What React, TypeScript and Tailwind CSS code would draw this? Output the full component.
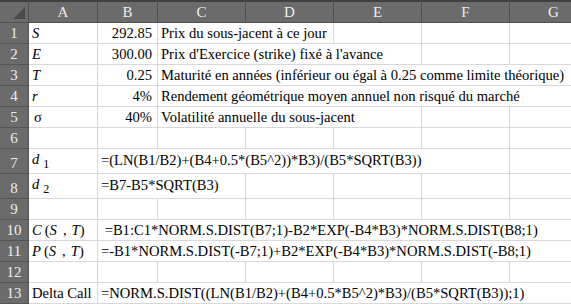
import type { ReactNode } from 'react';

type Cell = { span?: number; content?: ReactNode; right?: boolean };

const spanClass: Record<number, string> = {
    1: 'col-span-1',
    2: 'col-span-2',
    3: 'col-span-3',
    4: 'col-span-4',
    5: 'col-span-5',
    6: 'col-span-6',
};

const empty = (n: number): Cell[] => Array.from({ length: n }, () => ({}));

function Sub({ v, s }: { v: string; s: string }) {
    return (
        <span className="italic">
            {v}
            <span className="not-italic text-[12px] ml-[4px] relative top-[4px]">{s}</span>
        </span>
    );
}

function Fn({ f }: { f: string }) {
    return (
        <span>
            <span className="italic">{f}</span>
            <span className="ml-[3px]">(</span>
            <span className="italic">S</span>
            <span className="ml-[6px]">,</span>
            <span className="italic ml-[5px]">T</span>
            <span>)</span>
        </span>
    );
}

const rows: { h: string; cells: Cell[] }[] = [
    {
        h: 'pb-[1px]',
        cells: [
            { content: <span className="italic">S</span> },
            { content: '292.85', right: true },
            { span: 2, content: 'Prix du sous-jacent à ce jour' },
            ...empty(3),
        ],
    },
    {
        h: 'pb-[1px]',
        cells: [
            { content: <span className="italic">E</span> },
            { content: '300.00', right: true },
            { span: 3, content: "Prix d'Exercice (strike) fixé à l'avance" },
            ...empty(2),
        ],
    },
    {
        h: 'pb-[1px]',
        cells: [
            { content: <span className="italic">T</span> },
            { content: '0.25', right: true },
            { span: 5, content: 'Maturité en années (inférieur ou égal à 0.25 comme limite théorique)' },
        ],
    },
    {
        h: 'pb-[1px]',
        cells: [
            { content: <span className="italic">r</span> },
            { content: '4%', right: true },
            { span: 5, content: 'Rendement géométrique moyen annuel non risqué du marché' },
        ],
    },
    {
        h: 'pb-[1px]',
        cells: [
            { content: <span className="ml-[2px]">σ</span> },
            { content: '40%', right: true },
            { span: 3, content: 'Volatilité annuelle du sous-jacent' },
            ...empty(2),
        ],
    },
    { h: 'pb-[1px]', cells: empty(7) },
    {
        h: 'pb-[4px]',
        cells: [
            { content: <Sub v="d" s="1" /> },
            { span: 5, content: '=(LN(B1/B2)+(B4+0.5*(B5^2))*B3)/(B5*SQRT(B3))' },
            ...empty(1),
        ],
    },
    {
        h: 'pb-[4px]',
        cells: [
            { content: <Sub v="d" s="2" /> },
            { span: 2, content: '=B7-B5*SQRT(B3)' },
            ...empty(4),
        ],
    },
    { h: 'pb-[1px]', cells: empty(7) },
    {
        h: 'pb-[1px]',
        cells: [
            { content: <Fn f="C" /> },
            { span: 6, content: '\u00a0=B1:C1*NORM.S.DIST(B7;1)-B2*EXP(-B4*B3)*NORM.S.DIST(B8;1)' },
        ],
    },
    {
        h: 'pb-[1px]',
        cells: [
            { content: <Fn f="P" /> },
            { span: 6, content: '=-B1*NORM.S.DIST(-B7;1)+B2*EXP(-B4*B3)*NORM.S.DIST(-B8;1)' },
        ],
    },
    { h: 'pb-[1px]', cells: empty(7) },
    {
        h: 'pb-[1px]',
        cells: [
            { content: 'Delta Call' },
            { span: 6, content: '=NORM.S.DIST((LN(B1/B2)+(B4+0.5*B5^2)*B3)/(B5*SQRT(B3));1)' },
        ],
    },
];

const letters = ['A', 'B', 'C', 'D', 'E', 'F', 'G'];

export default function App() {
    return (
        <div className="w-[571px] h-[304px] overflow-hidden bg-white font-['Liberation_Serif',serif] text-[14.6px] text-black">
            <div className="grid w-[598px] grid-cols-[29px_69px_60px_88px_88px_88px_88px_88px] grid-rows-[23px_repeat(6,21px)_25px_25px_repeat(5,21px)]">
                {/* corner */}
                <div className="relative bg-[#6b6b6b] border-t-2 border-t-[#404040] border-r border-b border-[#505050]">
                    <div className="absolute right-[3px] bottom-[3px] w-0 h-0 border-l-[12px] border-l-transparent border-b-[12px] border-b-[#4a4a4a]" />
                </div>
                {letters.map((l) => (
                    <div
                        key={l}
                        className="flex items-center justify-center bg-[#6b6b6b] border-t-2 border-t-[#404040] border-r border-b border-[#505050] text-[#ededed] text-[15px]"
                    >
                        {l}
                    </div>
                ))}

                {rows.map((row, i) => (
                    <div key={i} className="contents">
                        <div className="flex items-end justify-center bg-[#6b6b6b] border-b border-r border-[#555555] text-[#ededed] text-[15px] pb-[1px] leading-[18px]">
                            {i + 1}
                        </div>
                        {row.cells.map((c, j) => (
                            <div
                                key={j}
                                className={`${spanClass[c.span ?? 1]} flex items-end whitespace-nowrap border-r border-b border-[#d8d8d8] leading-[18px] ${row.h} ${
                                    c.right ? 'justify-end pr-[5px]' : 'pl-[3px]'
                                }`}
                            >
                                {c.content}
                            </div>
                        ))}
                    </div>
                ))}
            </div>
        </div>
    );
}
